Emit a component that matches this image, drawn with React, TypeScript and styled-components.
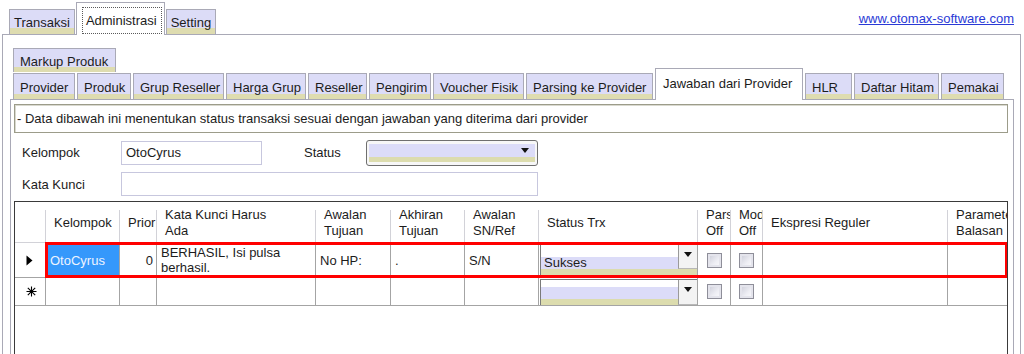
import React from "react"
import styled, { createGlobalStyle, css } from "styled-components"

const GlobalStyle = createGlobalStyle`
  html, body { margin: 0; padding: 0; background: #fff; }
  body {
    font-family: "Liberation Sans", Arial, sans-serif;
    font-size: 13px;
    color: #1c1c1c;
    overflow: hidden;
  }
`

// shared column widths for the data grid (row header first)
const COLUMNS = "31px 74px 37px 159px 75px 74px 74px 159px 33px 32px 185px 82px"

const tabFill = css<{ $band?: number }>`
  background: linear-gradient(
    to bottom,
    #dcdcf7 0,
    #dcdcf7 calc(100% - ${p => p.$band ?? 6}px),
    #dedcb0 calc(100% - ${p => p.$band ?? 6}px),
    #dedcb0 100%
  );
`

const Page = styled.div`
  width: 1024px;
  height: 354px;
  overflow: hidden;
  display: flex;
  flex-direction: column;
`

const TopBar = styled.div`
  flex: none;
  display: flex;
  align-items: flex-end;
  justify-content: space-between;
  height: 34px;
  padding: 0 10px 0 9px;
`

const TopTabs = styled.div`
  display: flex;
  align-items: flex-end;
  gap: 1px;
  position: relative;
  z-index: 2;
`

const TopTab = styled.div<{ $active?: boolean }>`
  box-sizing: border-box;
  display: flex;
  align-items: center;
  height: ${p => (p.$active ? 33 : 25)}px;
  margin-bottom: ${p => (p.$active ? -1 : 0)}px;
  padding: ${p => (p.$active ? "2px 2px 0 5px" : "1px 4px 0")};
  border: 1px solid #a9a9b6;
  border-bottom: none;
  ${p => (p.$active ? "background: #fff;" : tabFill)}
`

const Focus = styled.span`
  box-sizing: border-box;
  height: 27px;
  display: flex;
  align-items: center;
  padding: 0 4px 0 3px;
  border: 1px dotted #5a5a5a;
`

const SiteLink = styled.a`
  align-self: center;
  margin-top: 2px;
  color: #2a3ad6;
  text-decoration: underline;
  cursor: pointer;
`

const OuterPanel = styled.div`
  flex: 1;
  box-sizing: border-box;
  width: 1019px;
  margin-left: 2px;
  padding: 13px 6px 0 7px;
  border: 1px solid #a9a9b6;
  border-bottom: none;
  display: flex;
  flex-direction: column;
`

const SubTabs = styled.div`
  padding-left: 3px;
  display: flex;
  flex-direction: column;
  position: relative;
  z-index: 2;
`

const SubTabRow = styled.div<{ $height: number }>`
  display: flex;
  align-items: flex-end;
  gap: 2px;
  height: ${p => p.$height}px;
`

const SubTab = styled.div<{ $active?: boolean; $width: number; $height?: number; $band?: number }>`
  box-sizing: border-box;
  flex: none;
  width: ${p => p.$width}px;
  height: ${p => (p.$active ? 32 : p.$height ?? 26)}px;
  margin-bottom: ${p => (p.$active ? -1 : 0)}px;
  padding: ${p => (p.$active ? "0 0 3px 7px" : "2px 0 0 6px")};
  display: flex;
  align-items: center;
  white-space: nowrap;
  border: 1px solid #a9a9b6;
  border-bottom: none;
  ${p => (p.$active ? "background: #fff;" : tabFill)}
`

const InnerPanel = styled.div`
  flex: 1;
  box-sizing: border-box;
  padding: 4px 5px 0 3px;
  border: 1px solid #a9a9b6;
  border-bottom: none;
  display: flex;
  flex-direction: column;
`

const InfoBox = styled.div`
  box-sizing: border-box;
  height: 29px;
  padding: 0 2px 1px;
  display: flex;
  align-items: center;
  border: 1px solid #9c9c8a;
  box-shadow: inset 1px 1px 0 #d9d9cf;
`

const Form = styled.div`
  display: grid;
  grid-template-columns: 99px 141px 42px 62px 172px;
  grid-template-rows: 25px 24px;
  row-gap: 7px;
  align-items: center;
  margin-top: 7px;
  padding-left: 8px;
`

const Label = styled.span``

const TextBox = styled.div<{ $span?: string }>`
  box-sizing: border-box;
  height: 24px;
  padding: 0 4px 1px;
  display: flex;
  align-items: center;
  border: 1px solid #c7c7de;
  background: #fff;
  grid-column: ${p => p.$span ?? "auto"};
`

const ComboBox = styled.div`
  box-sizing: border-box;
  height: 26px;
  padding: 3px 2px 3px 2px;
  border: 1px solid #6f6f6f;
  border-radius: 3px;
  background: #f7f7f7;
  display: flex;
`

const ComboFace = styled.div`
  flex: 1;
  display: flex;
  justify-content: flex-end;
  align-items: center;
  padding: 0 6px 4px;
  background: linear-gradient(to bottom, #dcdcf8 0, #dcdcf8 70%, #dcdcae 70%, #dcdcae 100%);
`

const Arrow = styled.span`
  width: 0;
  height: 0;
  border-left: 4px solid transparent;
  border-right: 4px solid transparent;
  border-top: 5px solid #111;
`

const Grid = styled.div`
  flex: 1;
  margin-top: 5px;
  border: 1px solid #3a3a3a;
  border-bottom: none;
  background: #fff;
  overflow: hidden;
`

const Row = styled.div<{ $height: number }>`
  position: relative;
  display: grid;
  grid-template-columns: ${COLUMNS};
  height: ${p => p.$height}px;
`

const HeaderCell = styled.div`
  box-sizing: border-box;
  padding: 1px 2px 0 8px;
  display: flex;
  align-items: center;
  line-height: 16px;
  overflow: hidden;
  border-bottom: 1px solid #dadae2;
  border-right: 1px solid;
  border-image: linear-gradient(to bottom, transparent 0, transparent 22%, #d2d2d8 22%, #d2d2d8 100%) 1;
`

const HeaderText = styled.span<{ $max?: number }>`
  max-width: ${p => (p.$max ? `${p.$max}px` : "none")};
`

const Cell = styled.div<{ $align?: "left" | "right"; $selected?: boolean }>`
  box-sizing: border-box;
  padding: 0 3px 0 4px;
  display: flex;
  align-items: center;
  justify-content: ${p => (p.$align === "right" ? "flex-end" : "flex-start")};
  line-height: 15px;
  overflow: hidden;
  border-right: 1px solid #a4a4a4;
  border-bottom: 1px solid #a4a4a4;
  background: ${p => (p.$selected ? "#3598fb" : "#fff")};
  color: ${p => (p.$selected ? "#eef4ff" : "inherit")};
`

const RowHead = styled(Cell)`
  padding: 0 0 0 11px;
`

const CheckCell = styled(Cell)`
  justify-content: center;
  padding: 0;
`

const Check = styled.span`
  box-sizing: border-box;
  width: 15px;
  height: 15px;
  border: 1px solid #8e8e99;
  background: linear-gradient(135deg, #c9cad6 0%, #eeeef4 60%, #fbfbfd 100%);
  box-shadow: inset 0 0 0 2px #e4e4ec;
`

const ComboCell = styled(Cell)`
  padding: 1px 0 0 1px;
  align-items: stretch;
`

const CellCombo = styled.div<{ $top: number }>`
  flex: 1;
  display: flex;
  border-left: 1px solid #7a7a7a;
  border-top: 1px solid #7a7a7a;
  background: linear-gradient(
    to bottom,
    #fff 0,
    #fff ${p => p.$top}%,
    #dcdcf8 ${p => p.$top}%,
    #dcdcf8 76%,
    #dcdcae 76%,
    #dcdcae 100%
  );
`

const CellComboText = styled.span`
  flex: 1;
  display: flex;
  align-items: center;
  padding: 3px 3px 0;
`

const CellComboButton = styled.span<{ $height: string }>`
  box-sizing: border-box;
  width: 19px;
  height: ${p => p.$height};
  display: flex;
  justify-content: center;
  padding-top: 7px;
  background: #f3f3f3;
  border-left: 1px solid #9a9a9a;
  border-bottom: 1px solid #b8b8b8;
`

const Highlight = styled.div`
  position: absolute;
  left: 30px;
  top: -1px;
  width: 963px;
  height: 36px;
  box-sizing: border-box;
  border: 3px solid #f00;
  pointer-events: none;
`

const Current = () => (
  <svg width="7" height="11" viewBox="0 0 7 11">
    <path d="M0.5 0.5 L6.5 5.5 L0.5 10.5 Z" fill="#000" />
  </svg>
)

const NewRow = () => (
  <svg width="11" height="11" viewBox="0 0 11 11" stroke="#000" strokeWidth="1.1">
    <path d="M5.5 0.5 V10.5 M0.5 5.5 H10.5 M1.8 1.8 L9.2 9.2 M9.2 1.8 L1.8 9.2" />
  </svg>
)

const topTabs = [
  { label: "Transaksi" },
  { label: "Administrasi", active: true },
  { label: "Setting" },
]

const subTabs = [
  { label: "Provider", width: 62 },
  { label: "Produk", width: 54 },
  { label: "Grup Reseller", width: 91 },
  { label: "Harga Grup", width: 80 },
  { label: "Reseller", width: 59 },
  { label: "Pengirim", width: 62 },
  { label: "Voucher Fisik", width: 91 },
  { label: "Parsing ke Provider", width: 127 },
  { label: "Jawaban dari Provider", width: 148, active: true },
  { label: "HLR", width: 47 },
  { label: "Daftar Hitam", width: 85 },
  { label: "Pemakai", width: 63 },
]

const headers: { label: string; max?: number }[] = [
  { label: "Kelompok" },
  { label: "Prior" },
  { label: "Kata Kunci Harus Ada", max: 112 },
  { label: "Awalan Tujuan" },
  { label: "Akhiran Tujuan" },
  { label: "Awalan SN/Ref" },
  { label: "Status Trx" },
  { label: "Parsial Off" },
  { label: "Modem Off" },
  { label: "Ekspresi Reguler" },
  { label: "Parameter Balasan" },
]

export default function App() {
  return (
    <Page>
      <GlobalStyle />
      <TopBar>
        <TopTabs>
          {topTabs.map(t => (
            <TopTab key={t.label} $active={t.active}>
              {t.active ? <Focus>{t.label}</Focus> : t.label}
            </TopTab>
          ))}
        </TopTabs>
        <SiteLink>www.otomax-software.com</SiteLink>
      </TopBar>

      <OuterPanel>
        <SubTabs>
          <SubTabRow $height={24}>
            <SubTab $width={103} $height={24} $band={5}>Markup Produk</SubTab>
          </SubTabRow>
          <SubTabRow $height={27}>
            {subTabs.map(t => (
              <SubTab key={t.label} $width={t.width} $active={t.active} $band={5}>
                {t.label}
              </SubTab>
            ))}
          </SubTabRow>
        </SubTabs>

        <InnerPanel>
          <InfoBox>- Data dibawah ini menentukan status transaksi sesuai dengan jawaban yang diterima dari provider</InfoBox>

          <Form>
            <Label>Kelompok</Label>
            <TextBox>OtoCyrus</TextBox>
            <span />
            <Label>Status</Label>
            <ComboBox>
              <ComboFace>
                <Arrow />
              </ComboFace>
            </ComboBox>
            <Label>Kata Kunci</Label>
            <TextBox $span="2 / 6" />
          </Form>

          <Grid>
            <Row $height={41}>
              <HeaderCell />
              {headers.map(h => (
                <HeaderCell key={h.label}>
                  <HeaderText $max={h.max}>{h.label}</HeaderText>
                </HeaderCell>
              ))}
            </Row>

            <Row $height={35}>
              <RowHead>
                <Current />
              </RowHead>
              <Cell $selected>OtoCyrus</Cell>
              <Cell $align="right">0</Cell>
              <Cell>BERHASIL, Isi pulsa berhasil.</Cell>
              <Cell>No HP:</Cell>
              <Cell>.</Cell>
              <Cell>S/N</Cell>
              <ComboCell>
                <CellCombo $top={36}>
                  <CellComboText>Sukses</CellComboText>
                  <CellComboButton $height="76%">
                    <Arrow />
                  </CellComboButton>
                </CellCombo>
              </ComboCell>
              <CheckCell>
                <Check />
              </CheckCell>
              <CheckCell>
                <Check />
              </CheckCell>
              <Cell />
              <Cell />
              <Highlight />
            </Row>

            <Row $height={28}>
              <RowHead>
                <NewRow />
              </RowHead>
              <Cell />
              <Cell />
              <Cell />
              <Cell />
              <Cell />
              <Cell />
              <ComboCell>
                <CellCombo $top={30}>
                  <CellComboText />
                  <CellComboButton $height="100%">
                    <Arrow />
                  </CellComboButton>
                </CellCombo>
              </ComboCell>
              <CheckCell>
                <Check />
              </CheckCell>
              <CheckCell>
                <Check />
              </CheckCell>
              <Cell />
              <Cell />
            </Row>
          </Grid>
        </InnerPanel>
      </OuterPanel>
    </Page>
  )
}
